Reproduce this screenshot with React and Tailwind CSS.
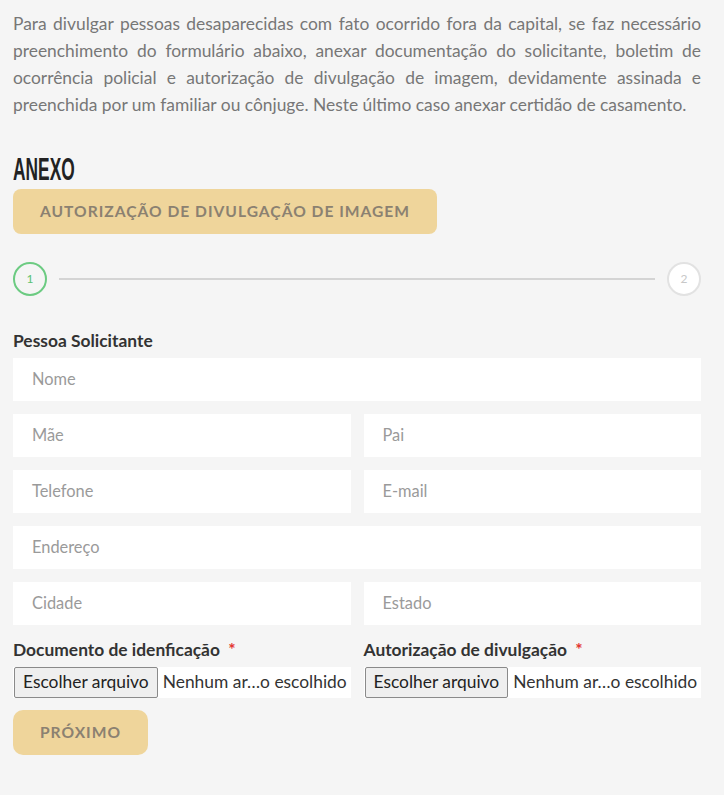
const fieldBase = 'h-[43px] bg-white px-[19px] flex items-center text-[16.4px] text-[#9a9a9a]';

const Field = ({ placeholder, className = '' }) => (
  <div className={`${fieldBase} ${className}`}>{placeholder}</div>
);

const FileInput = ({ label }) => (
  <div className="flex flex-col">
    <label className="text-[17.4px] font-bold text-[#333] leading-5 mb-[7px] whitespace-nowrap">
      {label} <span className="text-[#e3342f] ml-1">*</span>
    </label>
    <div className="flex items-center h-[31px] bg-white">
      <span className="h-[31px] flex items-center px-[8px] ml-px border border-[#8a8a8a] rounded-[2px] bg-[#efefef] text-[17.4px] text-[#222] whitespace-nowrap">
        Escolher arquivo
      </span>
      <span className="ml-[5px] text-[17.4px] text-[#333] whitespace-nowrap">Nenhum ar…o escolhido</span>
    </div>
  </div>
);

const App = () => {
  return (
    <div
      className="min-h-screen bg-[#f5f5f5] pl-[13px] pr-[23px] pt-[10px] pb-10"
      style={{ fontFamily: 'Lato, "Open Sans", sans-serif' }}
    >
      <p className="text-[17.4px] leading-[27px] text-[#777] text-justify">
        Para divulgar pessoas desaparecidas com fato ocorrido fora da capital, se faz necessário preenchimento do
        formulário abaixo, anexar documentação do solicitante, boletim de ocorrência policial e autorização de
        divulgação de imagem, devidamente assinada e preenchida por um familiar ou cônjuge. Neste último caso anexar
        certidão de casamento.
      </p>

      <h2 className="mt-[38px] h-[28px] flex items-center">
        <span
          className="inline-block origin-left scale-x-[0.56] text-[31px] leading-7 font-bold text-[#222]"
          style={{ fontFamily: '"Liberation Sans", Arial, sans-serif' }}
        >
          ANEXO
        </span>
      </h2>

      <button className="mt-[5px] h-[45px] w-[424px] rounded-[8px] bg-[#efd59b] text-[15.6px] font-bold tracking-[1px] text-[#8b8171]">
        AUTORIZAÇÃO DE DIVULGAÇÃO DE IMAGEM
      </button>

      <div className="mt-[28px] flex items-center">
        <div className="w-[34px] h-[34px] rounded-full border-2 border-[#6ccb82] flex items-center justify-center text-[12px] text-[#5cc273]">
          1
        </div>
        <div className="flex-1 mx-[12px] h-[2px] bg-[#d4d4d4]" />
        <div className="w-[34px] h-[34px] rounded-full border-2 border-[#e2e2e2] bg-white flex items-center justify-center text-[12px] text-[#c8c8c8]">
          2
        </div>
      </div>

      <h3 className="mt-[35px] text-[17.4px] leading-5 font-bold text-[#333]">Pessoa Solicitante</h3>

      <div className="mt-[7px] grid grid-cols-2 gap-x-[13px] gap-y-[13px]">
        <Field placeholder="Nome" className="col-span-2" />
        <Field placeholder="Mãe" />
        <Field placeholder="Pai" />
        <Field placeholder="Telefone" />
        <Field placeholder="E-mail" />
        <Field placeholder="Endereço" className="col-span-2" />
        <Field placeholder="Cidade" />
        <Field placeholder="Estado" />
      </div>

      <div className="mt-[15px] grid grid-cols-2 gap-x-[13px]">
        <FileInput label="Documento de idenficação" />
        <FileInput label="Autorização de divulgação" />
      </div>

      <button className="mt-[12px] h-[45px] w-[135px] rounded-[10px] bg-[#efd59b] text-[15.6px] font-bold tracking-[1px] text-[#8b8171]">
        PRÓXIMO
      </button>
    </div>
  );
};

export default App;
